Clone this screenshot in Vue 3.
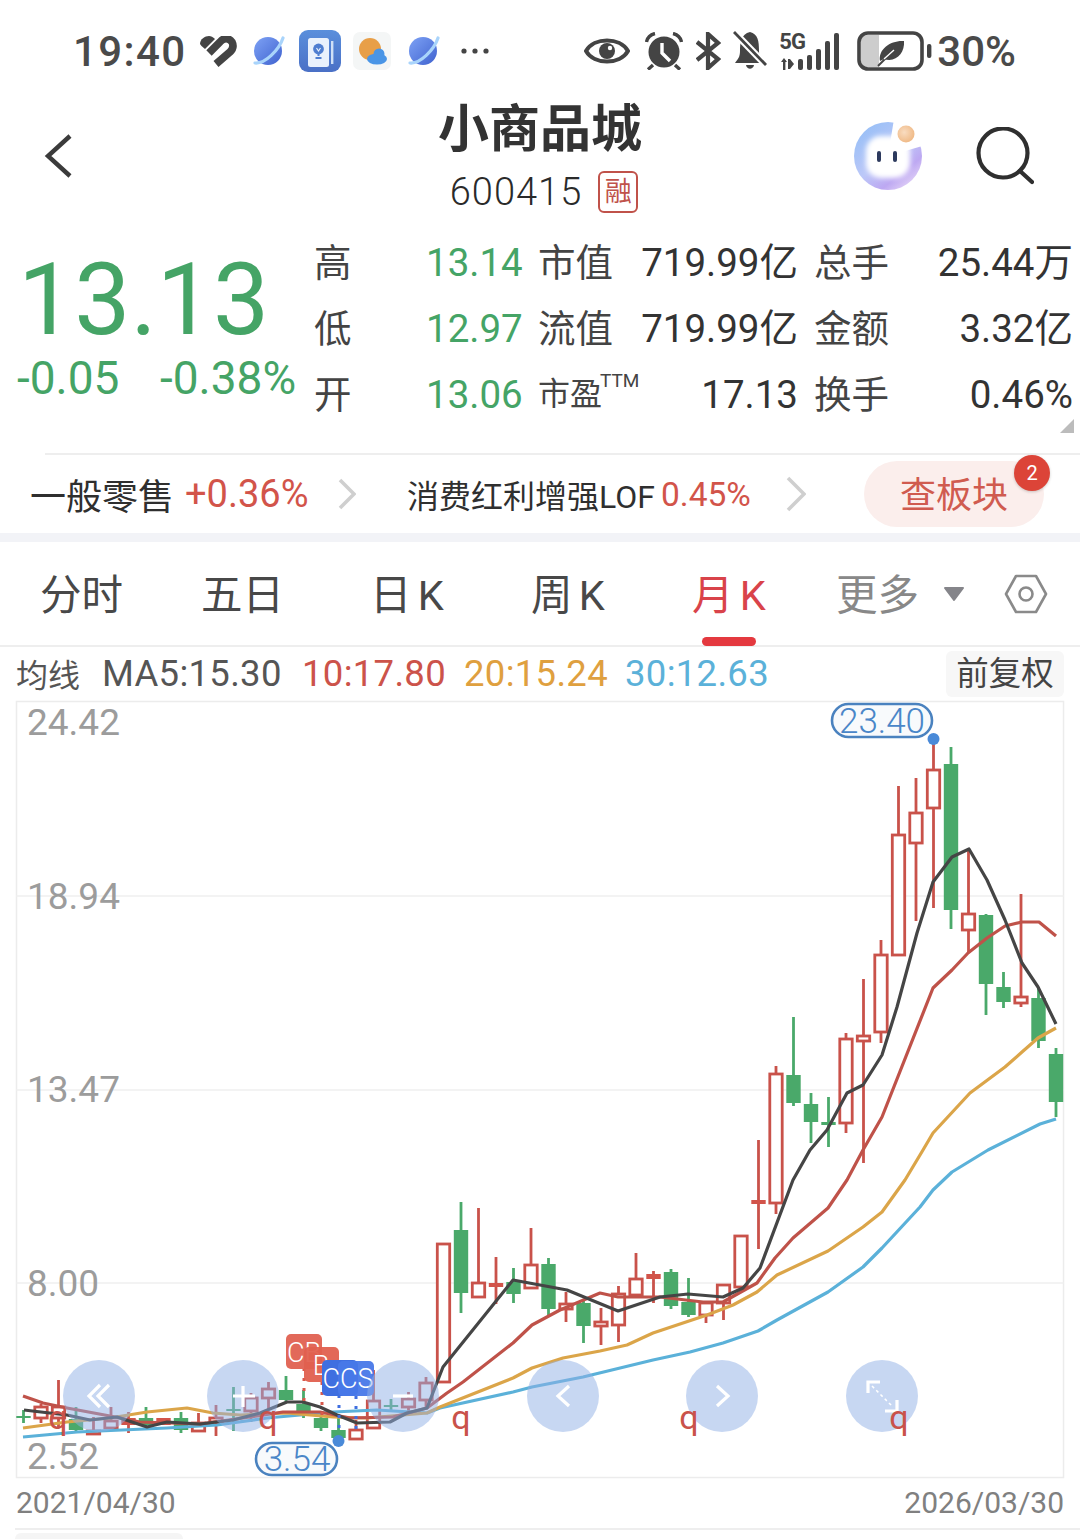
<script setup>
const stats = [
  { label: '高', val: '13.14', l2: '市值', v2: '719.99亿', l3: '总手', v3: '25.44万', cjk: true },
  { label: '低', val: '12.97', l2: '流值', v2: '719.99亿', l3: '金额', v3: '3.32亿', cjk: true },
  { label: '开', val: '13.06', l2: '市盈', ttm: true, v2: '17.13', l3: '换手', v3: '0.46%' },
]

// i = slot from the right, bodyTop, bodyBottom, wickTop, wickBottom, kind
// kind: r hollow red, f filled red, g green
const raw = [
  [0, 1054, 1102, 1048, 1117, 'g'], [1, 998, 1041, 987, 1048, 'g'], [2, 997, 1003, 894, 1007, 'r'],
  [3, 987, 1002, 972, 1008, 'g'], [4, 915, 984, 914, 1015, 'g'], [5, 914, 930, 848, 953, 'r'],
  [6, 764, 910, 747, 929, 'g'], [7, 770, 808, 739, 908, 'r'], [8, 813, 843, 778, 921, 'r'],
  [9, 835, 955, 786, 955, 'r'], [10, 955, 1032, 940, 1043, 'r'], [11, 1036, 1041, 979, 1163, 'r'],
  [12, 1039, 1123, 1033, 1133, 'r'], [13, 1122, 1125, 1097, 1147, 'g'], [14, 1104, 1122, 1093, 1143, 'g'],
  [15, 1075, 1103, 1017, 1106, 'g'], [16, 1074, 1203, 1066, 1214, 'r'], [17, 1200, 1204, 1140, 1249, 'f'],
  [18, 1236, 1287, 1235, 1290, 'r'], [19, 1285, 1303, 1285, 1320, 'r'], [20, 1303, 1315, 1303, 1323, 'r'],
  [21, 1302, 1315, 1278, 1317, 'g'], [22, 1272, 1306, 1269, 1309, 'g'], [23, 1274, 1279, 1271, 1303, 'f'],
  [24, 1279, 1295, 1253, 1295, 'r'], [25, 1294, 1325, 1286, 1342, 'r'], [26, 1322, 1326, 1308, 1345, 'r'],
  [27, 1303, 1326, 1300, 1343, 'g'], [28, 1304, 1309, 1292, 1322, 'r'], [29, 1264, 1309, 1258, 1315, 'g'],
  [30, 1265, 1288, 1228, 1288, 'r'], [31, 1282, 1294, 1268, 1303, 'g'], [32, 1283, 1287, 1257, 1304, 'f'],
  [33, 1283, 1297, 1208, 1297, 'r'], [34, 1230, 1293, 1202, 1313, 'g'], [35, 1244, 1382, 1244, 1382, 'r'],
  [36, 1383, 1400, 1377, 1407, 'r'], [37, 1399, 1407, 1392, 1413, 'r'], [38, 1405, 1407, 1399, 1412, 'g'],
  [39, 1401, 1428, 1370, 1428, 'r'], [40, 1430, 1439, 1420, 1439, 'r'], [41, 1430, 1438, 1414, 1440, 'g'],
  [42, 1418, 1428, 1413, 1431, 'g'], [43, 1404, 1412, 1390, 1418, 'g'], [44, 1390, 1400, 1376, 1403, 'g'],
  [45, 1389, 1398, 1382, 1410, 'r'], [46, 1398, 1411, 1393, 1422, 'r'], [47, 1409, 1411, 1387, 1431, 'g'],
  [48, 1418, 1422, 1405, 1436, 'r'], [49, 1423, 1431, 1413, 1431, 'r'], [50, 1418, 1430, 1412, 1433, 'g'],
  [51, 1418, 1425, 1418, 1425, 'f'], [52, 1418, 1425, 1407, 1427, 'g'], [53, 1418, 1425, 1412, 1433, 'f'],
  [54, 1421, 1428, 1407, 1428, 'r'], [55, 1431, 1434, 1417, 1435, 'r'], [56, 1419, 1430, 1407, 1433, 'g'],
  [57, 1407, 1418, 1380, 1428, 'r'], [58, 1407, 1418, 1404, 1423, 'r'], [59, 1416, 1418, 1410, 1423, 'g'],
]
const candles = raw.map(([i, top, bottom, wickTop, wickBottom, kind]) => ({
  x: 1056 - i * 17.5, top, bottom, wickTop, wickBottom, kind,
}))

const ma5 = '24,1410 41,1412 67,1415 90,1420 117,1417 147,1427 167,1422 200,1424 233,1420 260,1413 287,1402 303,1402 320,1407 337,1415 357,1423 390,1422 407,1413 427,1408 443,1367 513,1280 567,1290 618,1311 660,1297 688,1294 723,1297 743,1288 760,1268 793,1180 810,1150 827,1130 847,1093 863,1085 882,1055 897,1007 917,933 933,882 952,857 969,849 987,880 1005,920 1022,963 1038,987 1056,1024'
const ma10 = '23,1396 43,1403 67,1408 110,1416 140,1422 200,1424 250,1417 283,1412 320,1412 350,1418 393,1417 427,1408 447,1393 463,1382 513,1343 532,1325 560,1310 600,1293 618,1297 660,1297 703,1302 723,1302 757,1283 775,1258 793,1238 828,1208 847,1180 863,1150 882,1117 933,988 952,970 968,953 987,938 1005,926 1022,922 1039,922 1056,936'
const ma20 = '23,1428 67,1422 110,1418 147,1412 187,1408 213,1413 240,1415 287,1413 333,1417 367,1418 427,1413 440,1407 513,1378 532,1368 563,1358 600,1351 627,1345 653,1333 707,1315 733,1305 757,1292 777,1275 828,1251 863,1227 882,1212 905,1180 923,1150 933,1133 970,1093 1005,1067 1022,1052 1038,1038 1056,1028'
const ma30 = '23,1437 77,1432 167,1428 217,1425 267,1418 333,1412 377,1410 427,1413 440,1408 513,1392 532,1387 583,1377 653,1360 690,1352 723,1343 758,1331 777,1320 828,1292 863,1267 882,1248 920,1207 933,1190 952,1172 988,1150 1040,1124 1056,1119'

const grid = [896, 1090, 1283]
const axis = [
  { t: '24.42', y: 735 }, { t: '18.94', y: 909 }, { t: '13.47', y: 1102 }, { t: '8.00', y: 1296 }, { t: '2.52', y: 1469 },
]
const circles = [99, 243, 403, 563, 722, 882]
const marks = [58, 268, 461, 689, 899]
const sigBars = [[18, 26], [27, 22], [36, 16], [45, 8], [54, 0]]
</script>

<template>
  <div class="page">
    <div class="status">
      <div class="status-side">
        <span class="time">19:40</span>
        <svg class="ic-heart" width="37" height="31" viewBox="0 0 37 31">
          <path d="M0 8 C0 3 5 0 9 0 C11 0 13 1 15 3 L5 13 L1.5 10 Z" fill="#444" />
          <path d="M9 17 L20 6 C24 1 29 2 32 6 C34 10 33 13 30 16 L16 28" fill="none" stroke="#444" stroke-width="7.6" />
        </svg>
        <svg class="ic-planet" width="32" height="32" viewBox="0 0 32 32">
          <defs>
            <linearGradient id="pl" x1="0" y1="0" x2="1" y2="1">
              <stop offset="0" stop-color="#7ea2f5" />
              <stop offset="1" stop-color="#3f62cf" />
            </linearGradient>
          </defs>
          <circle cx="15" cy="16" r="14" fill="url(#pl)" />
          <path d="M2 28 C12 29 26 15 30 3" stroke="#a9d4fb" stroke-width="3.2" fill="none" stroke-linecap="round" />
        </svg>
        <svg class="ic-book" width="42" height="42" viewBox="0 0 42 42">
          <defs>
            <linearGradient id="bk" x1="0" y1="0" x2="0" y2="1">
              <stop offset="0" stop-color="#5a8fdc" />
              <stop offset="1" stop-color="#4a70c6" />
            </linearGradient>
          </defs>
          <rect width="42" height="42" rx="9" fill="url(#bk)" />
          <rect x="9" y="8" width="21" height="29" rx="2.5" fill="#e9f1fc" />
          <rect x="32" y="11" width="2.4" height="23" fill="#cfe0f6" />
          <circle cx="19.5" cy="19" r="5.4" fill="#4f7ed0" />
          <path d="M17 19 L19.5 22 L22 19 M19.5 22 V26 M16.5 28 H22.5" stroke="#4f7ed0" stroke-width="2" fill="none" />
          <path d="M17.5 18 L19.5 21 L21.5 18" stroke="#e9f1fc" stroke-width="1.2" fill="none" />
        </svg>
        <svg class="ic-weather" width="38" height="38" viewBox="0 0 38 38">
          <rect width="38" height="38" rx="7" fill="#f4f6f6" />
          <circle cx="17" cy="17" r="11" fill="#e89f48" />
          <ellipse cx="24" cy="27" rx="10" ry="5.5" fill="#4a95e6" />
          <circle cx="26" cy="22" r="5.5" fill="#4a95e6" />
        </svg>
        <svg class="ic-planet2" width="32" height="32" viewBox="0 0 32 32">
          <circle cx="15" cy="16" r="14" fill="url(#pl)" />
          <path d="M2 28 C12 29 26 15 30 3" stroke="#a9d4fb" stroke-width="3.2" fill="none" stroke-linecap="round" />
        </svg>
        <svg class="ic-dots" width="30" height="8" viewBox="0 0 30 8">
          <circle cx="4" cy="4" r="2.6" fill="#444" />
          <circle cx="15" cy="4" r="2.6" fill="#444" />
          <circle cx="26" cy="4" r="2.6" fill="#444" />
        </svg>
      </div>
      <div class="status-side">
        <svg width="46" height="32" viewBox="0 0 46 32">
          <path d="M2 16 C10 2 36 2 44 16 C36 30 10 30 2 16 Z" fill="none" stroke="#444" stroke-width="4" />
          <circle cx="23" cy="16" r="8" fill="#444" />
          <circle cx="26" cy="13" r="2.2" fill="#fff" />
        </svg>
        <svg class="gap-alarm" width="38" height="38" viewBox="0 0 38 38">
          <circle cx="19" cy="20" r="15.5" fill="#444" />
          <path d="M1.5 10 Q3 3 10 1.5 M36.5 10 Q35 3 28 1.5 M8 33 L3 37.5 M30 33 L35 37.5" stroke="#444" stroke-width="3.4" fill="none" />
          <path d="M17 11 V21 L25 29" stroke="#fff" stroke-width="3.4" fill="none" />
        </svg>
        <svg class="gap-bt" width="25" height="38" viewBox="0 0 25 38">
          <path d="M1 10 L22 27 L12 36 V2 L22 11 L1 28" fill="none" stroke="#444" stroke-width="4.2" />
        </svg>
        <svg class="gap-bell" width="35" height="40" viewBox="0 0 35 40">
          <path d="M17 1 C8 3 7 12 7 20 C7 26 5 28 2 32 H31 C28 28 26 26 26 20 C26 10 25 3 17 1 Z" fill="#444" />
          <path d="M13 34 H21 C20 39 14 39 13 34 Z" fill="#444" />
          <path d="M1 1 L33 34" stroke="#fff" stroke-width="7" />
          <path d="M1 1 L33 34" stroke="#444" stroke-width="2.8" />
        </svg>
        <div class="sig">
          <span class="sig-5g">5G</span>
          <svg width="62" height="37" viewBox="0 0 62 37">
            <path d="M1 29 L4 25 L7 29 Z M8 26 H10 L14 31 L10 36 H8 Z" fill="#444" />
            <rect x="3" y="27" width="2.4" height="10" fill="#444" />
            <rect v-for="b in sigBars" :key="b[0]" :x="b[0]" :y="b[1]" width="5" :height="37 - b[1]" rx="2" fill="#444" />
          </svg>
        </div>
        <svg class="gap-batt" width="76" height="40" viewBox="0 0 76 40">
          <rect x="4" y="4" width="18" height="32" fill="#cdcdcd" />
          <rect x="2" y="2" width="63" height="36" rx="9" fill="none" stroke="#444" stroke-width="3.6" />
          <rect x="70" y="13" width="4.4" height="14" rx="2" fill="#444" />
          <path d="M23 30 C21 18 34 9 47 10 C48 22 39 32 27 28 Z" fill="#444" />
          <path d="M21 35 L37 19" stroke="#444" stroke-width="2" />
          <path d="M27 28 L37 19" stroke="#fff" stroke-width="1.4" />
        </svg>
        <span class="pct">30%</span>
      </div>
    </div>

    <div class="head">
      <div class="head-left">
        <svg width="30" height="44" viewBox="0 0 30 44">
          <path d="M26 2 L4 22 L26 42" fill="none" stroke="#3b3b3b" stroke-width="4.4" />
        </svg>
      </div>
      <div class="head-mid">
        <div class="title">小商品城</div>
        <div class="code-row">
          <span class="code">600415</span>
          <span class="tag">融</span>
        </div>
      </div>
      <div class="head-right">
        <svg width="70" height="70" viewBox="0 0 70 70">
          <defs>
            <linearGradient id="av" x1="0" y1="0" x2=".8" y2="1">
              <stop offset="0" stop-color="#8fbdf6" />
              <stop offset=".55" stop-color="#bcc8f8" />
              <stop offset=".8" stop-color="#bda8f2" />
              <stop offset="1" stop-color="#e6d6f7" />
            </linearGradient>
            <radialGradient id="ball" cx=".4" cy=".4" r=".7">
              <stop offset="0" stop-color="#f9dcc0" />
              <stop offset="1" stop-color="#eeb57f" />
            </radialGradient>
            <filter id="soft" x="-20%" y="-20%" width="140%" height="140%">
              <feGaussianBlur stdDeviation="2.4" />
            </filter>
          </defs>
          <circle cx="34" cy="35" r="34" fill="url(#av)" />
          <path d="M34 35 L40 -2 L72 -2 L72 24 Z" fill="#fff" />
          <rect x="12" y="15" width="44" height="42" rx="15" fill="#fff" filter="url(#soft)" />
          <rect x="23" y="30" width="4" height="11" rx="2" fill="#2d3a5e" />
          <rect x="39" y="30" width="4" height="11" rx="2" fill="#2d3a5e" />
          <circle cx="52" cy="13" r="8.5" fill="url(#ball)" />
        </svg>
        <svg class="search" width="58" height="58" viewBox="0 0 58 58">
          <circle cx="27" cy="26" r="24.5" fill="none" stroke="#2f2f2f" stroke-width="4.2" />
          <path d="M44 44 L56 55" stroke="#2f2f2f" stroke-width="4.2" stroke-linecap="round" />
        </svg>
      </div>
    </div>

    <div class="quote">
      <div class="price-box">
        <div class="price">13.13</div>
        <div class="change">
          <span class="chg-abs">-0.05</span>
          <span>-0.38%</span>
        </div>
      </div>
      <div class="stats">
        <template v-for="row in stats" :key="row.label">
          <span class="s-label">{{ row.label }}</span>
          <span class="s-green">{{ row.val }}</span>
          <span class="s-label">
            <template v-if="row.ttm"><span class="pe">{{ row.l2 }}</span><sup class="ttm">TTM</sup></template>
            <template v-else>{{ row.l2 }}</template>
          </span>
          <span class="s-val" :class="{ 's-cjk': row.cjk }">{{ row.v2 }}</span>
          <span class="s-label">{{ row.l3 }}</span>
          <span class="s-val s-end" :class="{ 's-cjk': row.cjk }">{{ row.v3 }}</span>
        </template>
      </div>
      <i class="corner"></i>
    </div>

    <div class="rule"></div>
    <div class="sector">
      <span class="sec-name">一般零售</span>
      <span class="sec-pct">+0.36%</span>
      <svg class="sec-arrow" width="18" height="32" viewBox="0 0 18 32">
        <path d="M2 2 L16 16 L2 30" fill="none" stroke="#cfcfcf" stroke-width="3.6" />
      </svg>
      <span class="fund-name">消费红利增强LOF</span>
      <span class="fund-pct">0.45%</span>
      <svg class="fund-arrow" width="20" height="36" viewBox="0 0 20 36">
        <path d="M2 2 L18 18 L2 34" fill="none" stroke="#cfcfcf" stroke-width="3.6" />
      </svg>
      <div class="sec-btn">
        查板块
        <span class="badge">2</span>
      </div>
    </div>
    <div class="band"></div>

    <div class="tabs">
      <span class="tab">分时</span>
      <span class="tab">五日</span>
      <span class="tab">日 K</span>
      <span class="tab">周 K</span>
      <span class="tab active">月 K<i class="bar"></i></span>
      <span class="tab more">更多</span>
      <svg class="caret" width="22" height="16" viewBox="0 0 22 16">
        <path d="M2 2 H20 L11 14 Z" fill="#85858a" stroke="#85858a" stroke-width="2" stroke-linejoin="round" />
      </svg>
      <svg class="hex" width="44" height="40" viewBox="0 0 44 40">
        <path d="M12 2 H32 L42 20 L32 38 H12 L2 20 Z" fill="none" stroke="#8a8a8a" stroke-width="2.6" stroke-linejoin="round" />
        <circle cx="22" cy="20" r="6.5" fill="none" stroke="#8a8a8a" stroke-width="2.6" />
      </svg>
    </div>

    <div class="ma">
      <span class="ma-name">均线</span>
      <span class="ma-5">MA5:15.30</span>
      <span class="ma-10">10:17.80</span>
      <span class="ma-20">20:15.24</span>
      <span class="ma-30">30:12.63</span>
      <span class="adjust">前复权</span>
    </div>

    <svg class="chart" width="1080" height="780" viewBox="0 700 1080 780">
      <rect x="16.5" y="701.5" width="1047" height="776" fill="#fff" stroke="#ececec" stroke-width="1.5" />
      <line v-for="y in grid" :key="y" x1="16" x2="1064" :y1="y" :y2="y" stroke="#efefef" stroke-width="1.5" />
      <text v-for="a in axis" :key="a.t" x="27" :y="a.y" class="axis">{{ a.t }}</text>

      <g v-for="c in candles" :key="c.x">
        <line :x1="c.x" :x2="c.x" :y1="c.wickTop" :y2="c.wickBottom" stroke-width="2.8" :stroke="c.kind === 'g' ? '#4aa96a' : '#c9524a'" />
        <rect v-if="c.kind === 'r'" :x="c.x - 6.2" :y="c.top" width="12.4" :height="c.bottom - c.top" fill="#fff" stroke="#c9524a" stroke-width="2.8" />
        <rect v-else :x="c.x - 7.2" :y="c.top" width="14.4" :height="c.bottom - c.top" :fill="c.kind === 'g' ? '#4aa96a' : '#d2544a'" />
      </g>

      <polyline :points="ma30" class="ln" stroke="#5bb1d9" />
      <polyline :points="ma20" class="ln" stroke="#dba549" />
      <polyline :points="ma10" class="ln" stroke="#bf5249" />
      <polyline :points="ma5" class="ln" stroke="#454545" />

      <line x1="304" x2="304" y1="1368" y2="1402" class="dot-line" stroke="#d8584b" />
      <line x1="322" x2="322" y1="1382" y2="1420" class="dot-line" stroke="#d8584b" />
      <line x1="339" x2="339" y1="1395" y2="1432" class="dot-line" stroke="#3f6fe0" />
      <line x1="356" x2="356" y1="1396" y2="1430" class="dot-line" stroke="#3f6fe0" />

      <rect x="286" y="1334" width="36" height="35" rx="5" fill="#e2695a" />
      <text x="304" y="1362" class="flag">CB</text>
      <rect x="304" y="1347" width="35" height="35" rx="5" fill="#e0604f" opacity=".95" />
      <text x="321" y="1375" class="flag">B</text>
      <rect x="322" y="1360" width="36" height="36" rx="5" fill="#3f6fe0" />
      <rect x="338" y="1361" width="36" height="35" rx="5" fill="#4878e8" opacity=".95" />
      <text x="348" y="1388" class="flag">CCS</text>

      <g v-for="x in circles" :key="x">
        <circle :cx="x" cy="1396" r="36" fill="#8fb0e6" opacity=".5" />
      </g>
      <path d="M100 1385 L89 1396 L100 1407 M109 1385 L98 1396 L109 1407" class="ctl" />
      <path d="M233 1396 H255 M243 1386 V1407" class="ctl" />
      <path d="M393 1396 H413" class="ctl" />
      <path d="M569 1386 L558 1396 L569 1406" class="ctl" />
      <path d="M717 1386 L728 1396 L717 1406" class="ctl" />
      <path d="M868 1393 V1382 H880 M885 1411 H897 V1400" class="ctl" />
      <path d="M872 1386 L893 1407" stroke="#fff" stroke-width="1.5" stroke-dasharray="3 3" fill="none" />

      <text v-for="x in marks" :key="x" :x="x" y="1429" class="mark">q</text>

      <rect x="832" y="704" width="100" height="33" rx="16.5" fill="#f8fafc" stroke="#4a82bf" stroke-width="2.6" />
      <text x="882" y="733" class="tip">23.40</text>
      <circle cx="933.5" cy="739" r="6" fill="#4a8ad8" />
      <rect x="256" y="1443" width="81" height="32" rx="16" fill="#f8fafc" stroke="#4a82bf" stroke-width="2.6" />
      <text x="297" y="1471" class="tip">3.54</text>
      <circle cx="338.5" cy="1441" r="6" fill="#4a8ad8" />
    </svg>

    <div class="dates">
      <span>2021/04/30</span>
      <span>2026/03/30</span>
    </div>
    <div class="foot-line"></div>
    <div class="foot-tab"></div>
  </div>
</template>

<style scoped>
.page {
  width: 1080px;
  height: 1539px;
  overflow: hidden;
  background: #fff;
  color: #3c3c3c;
  font-family: Roboto, "Noto Sans CJK SC", sans-serif;
}
.status {
  height: 100px;
  padding: 2px 64px 0 73px;
  display: flex;
  justify-content: space-between;
  align-items: center;
  box-sizing: border-box;
}
.status-side {
  display: flex;
  align-items: center;
}
.time {
  width: 112px;
  font-size: 42px;
  font-weight: 500;
  letter-spacing: 1.4px;
  color: #4a4a4a;
}
.ic-heart { margin-left: 15px; }
.ic-planet { margin-left: 16px; }
.ic-book { margin-left: 14px; }
.ic-weather { margin-left: 12px; }
.ic-planet2 { margin-left: 17px; }
.ic-dots { margin-left: 20px; }
.gap-alarm { margin-left: 15px; }
.gap-bt { margin-left: 13px; }
.gap-bell { margin-left: 12px; }
.sig {
  position: relative;
  margin-left: 12px;
  width: 62px;
  height: 37px;
}
.sig-5g {
  position: absolute;
  left: -1px;
  top: -2px;
  font-size: 22px;
  font-weight: 700;
  letter-spacing: -1px;
  line-height: 22px;
  color: #444;
}
.gap-batt { margin-left: 15px; }
.pct {
  margin-left: 4px;
  font-size: 42px;
  font-weight: 500;
  color: #4a4a4a;
}

.head {
  height: 129px;
  display: grid;
  grid-template-columns: 1fr auto 1fr;
}
.head-left {
  padding: 34px 0 0 44px;
}
.head-mid {
  text-align: center;
}
.title {
  font-size: 51px;
  font-weight: 700;
  line-height: 60px;
  color: #333;
}
.code-row {
  display: flex;
  justify-content: center;
  align-items: center;
  gap: 16px;
  margin-top: 10px;
  padding-left: 8px;
}
.code {
  font-size: 38px;
  font-weight: 300;
  letter-spacing: 1px;
  color: #2a2a2a;
}
.tag {
  width: 40px;
  height: 42px;
  line-height: 38px;
  text-align: center;
  box-sizing: border-box;
  border: 2px solid #c0524a;
  border-radius: 6px;
  font-size: 27px;
  color: #c0524a;
}
.head-right {
  display: flex;
  justify-content: flex-end;
  align-items: flex-start;
  padding: 21px 46px 0 0;
}
.search {
  margin: 6px 0 0 52px;
}

.quote {
  position: relative;
  height: 224px;
  display: flex;
}
.price-box {
  width: 314px;
  padding-top: 17px;
  box-sizing: border-box;
  color: #45a466;
}
.price {
  padding-left: 18px;
  font-size: 100px;
  line-height: 107px;
}
.change {
  display: flex;
  padding-left: 17px;
  font-size: 46px;
  line-height: 50px;
}
.chg-abs {
  width: 143px;
}
.stats {
  flex: 1;
  display: grid;
  grid-template-columns: 112px 112px 101px 159px 91px 1fr;
  grid-auto-rows: 66px;
  align-items: center;
  font-size: 38.5px;
}
.s-label {
  margin-bottom: 6px;
  font-size: 37.5px;
  color: #444;
  white-space: nowrap;
}
.s-green {
  color: #45a466;
}
.s-val {
  text-align: right;
  color: #333;
  white-space: nowrap;
}
.s-cjk {
  margin-bottom: 6px;
}
.s-end {
  padding-right: 7px;
}
.stats > .s-label:nth-child(6n + 5) {
  padding-left: 16px;
}
.pe {
  font-size: 32px;
}
.ttm {
  margin-left: -2px;
  font-size: 19px;
  vertical-align: 18px;
  line-height: 0;
}
.corner {
  position: absolute;
  right: 6px;
  bottom: 20px;
  width: 0;
  height: 0;
  border-left: 14px solid transparent;
  border-bottom: 14px solid #bcbcbc;
}

.rule {
  height: 2px;
  margin-left: 45px;
  background: #eee;
}
.sector {
  height: 78px;
  padding-left: 30px;
  display: flex;
  align-items: center;
}
.sec-name {
  width: 142px;
  font-size: 36px;
  white-space: nowrap;
  color: #2f2f2f;
}
.sec-pct {
  margin-left: 13px;
  width: 125px;
  font-size: 38px;
  color: #d2544a;
}
.sec-arrow {
  margin-left: 28px;
}
.fund-name {
  margin-left: 51px;
  width: 244px;
  font-size: 32px;
  white-space: nowrap;
  color: #2f2f2f;
}
.fund-pct {
  margin-left: 10px;
  width: 90px;
  font-size: 33.5px;
  color: #d2544a;
}
.fund-arrow {
  margin-left: 35px;
}
.sec-btn {
  position: relative;
  margin-left: 58px;
  width: 180px;
  height: 66px;
  line-height: 70px;
  border-radius: 33px;
  background: #fbeeec;
  text-align: center;
  font-size: 36px;
  color: #d05b4f;
}
.badge {
  position: absolute;
  right: -6px;
  top: -6px;
  width: 36px;
  height: 36px;
  border-radius: 50%;
  background: #dc4438;
  color: #fff;
  font-size: 20px;
  line-height: 36px;
  box-shadow: 0 1px 3px rgba(0, 0, 0, .2);
}
.band {
  height: 9px;
  background: #f2f3f7;
}

.tabs {
  height: 105px;
  padding-left: 40px;
  box-sizing: border-box;
  border-bottom: 2px solid #eee;
  display: grid;
  grid-template-columns: 161px 169px 161px 161px 144px 107px 61px auto;
  align-items: center;
}
.tab {
  position: relative;
  padding-top: 4px;
  font-size: 41.5px;
  line-height: 99px;
  word-spacing: -4px;
  color: #484848;
  white-space: nowrap;
}
.active {
  color: #d9434a;
}
.more {
  color: #888;
}
.bar {
  position: absolute;
  left: 10px;
  bottom: -1px;
  width: 54px;
  height: 9px;
  border-radius: 5px;
  background: #e4393f;
}
.ma {
  height: 53px;
  padding: 0 16px 1px;
  box-sizing: border-box;
  display: flex;
  align-items: center;
  font-size: 36.5px;
  letter-spacing: .3px;
  white-space: nowrap;
}
.ma-name {
  width: 86px;
  font-size: 32px;
  letter-spacing: 0;
  color: #555;
}
.ma-5 { width: 200px; color: #555; }
.ma-10 { width: 162px; color: #cc534a; }
.ma-20 { width: 161px; color: #dfa03f; }
.ma-30 { color: #5bb1d9; }
.adjust {
  margin: 2px 0 0 auto;
  width: 118px;
  height: 46px;
  line-height: 46px;
  text-align: center;
  border-radius: 6px;
  background: #f7f7f7;
  font-size: 32.5px;
  letter-spacing: 0;
  color: #444;
}
.chart {
  display: block;
}
.axis {
  font-size: 37px;
  fill: #9c9c9c;
}
.ln {
  fill: none;
  stroke-width: 3.2;
  stroke-linejoin: round;
}
.dot-line {
  stroke-width: 3;
  stroke-dasharray: 3 7;
}
.flag {
  font-size: 27px;
  fill: #fff;
  text-anchor: middle;
  font-weight: 300;
}
.ctl {
  fill: none;
  stroke: #fff;
  stroke-width: 3.2;
}
.mark {
  font-size: 34px;
  fill: #c9524a;
  text-anchor: middle;
}
.tip {
  font-size: 35px;
  font-weight: 300;
  fill: #4a86c8;
  text-anchor: middle;
}
.dates {
  height: 48px;
  padding: 0 16px 3px;
  box-sizing: border-box;
  display: flex;
  justify-content: space-between;
  align-items: center;
  font-size: 30px;
  color: #808080;
}
.foot-line {
  height: 2px;
  margin-left: 15px;
  background: #eee;
}
.foot-tab {
  width: 168px;
  height: 8px;
  margin: 3px 0 0 15px;
  border-radius: 6px 6px 0 0;
  background: #f5f5f5;
}
</style>
